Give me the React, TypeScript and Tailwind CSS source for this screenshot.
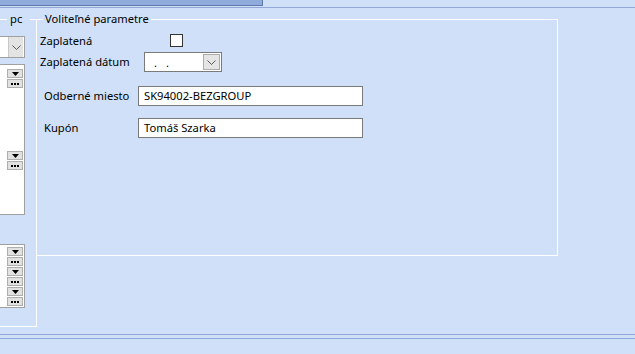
import type { ReactNode } from "react"

/* 小按钮：下拉箭头 */
function ArrowBtn() {
  return (
    <div className="w-[16px] h-[9px] bg-[#e1e1e1] border border-[#adadad] flex items-center justify-center">
      <svg width="7" height="4" viewBox="0 0 7 4">
        <path d="M0 0h7L3.5 4z" fill="#000" />
      </svg>
    </div>
  )
}

/* 小按钮：三个点 */
function DotsBtn() {
  return (
    <div className="w-[16px] h-[9px] bg-[#e1e1e1] border border-[#adadad] flex items-center justify-center">
      <svg width="8" height="2" viewBox="0 0 8 2">
        <rect x="0" y="0" width="2" height="2" fill="#000" />
        <rect x="3" y="0" width="2" height="2" fill="#000" />
        <rect x="6" y="0" width="2" height="2" fill="#000" />
      </svg>
    </div>
  )
}

function BtnPair() {
  return (
    <div className="flex flex-col gap-[1px]">
      <ArrowBtn />
      <DotsBtn />
    </div>
  )
}

function Chevron() {
  return (
    <svg width="9" height="5" viewBox="0 0 9 5">
      <path d="M0.5 0.5L4.5 4.5L8.5 0.5" fill="none" stroke="#5a5a5a" strokeWidth="1" />
    </svg>
  )
}

function Row({ children, className }: { children: ReactNode; className: string }) {
  return <div className={"flex items-center " + className}>{children}</div>
}

export default function App() {
  return (
    <div
      className="w-[635px] h-[354px] bg-[#cfe0f8] overflow-hidden flex flex-col text-[11.2px] leading-[16px] text-black"
      style={{ fontFamily: '"Noto Sans", "Open Sans", sans-serif' }}
    >
      {/* 顶部标签条 */}
      <div className="h-[7px] flex">
        <div className="w-[263px] h-[6px] bg-[#8fabdc] border-r border-b border-[#5d7aa8]" />
      </div>
      <div className="h-[1px] bg-[#91a8d6]" />

      {/* 主体 */}
      <div className="flex mt-[3px]">
        {/* 左侧面板 */}
        <fieldset className="w-[37px] h-[316px] border-t border-r border-b border-white flex flex-col">
          <legend className="ml-[7px] w-[23px] px-[3px]">pc</legend>
          {/* combo */}
          <div className="mt-[9px] w-[25px] h-[22px] bg-white border-t border-r border-b border-[#a0a0a0] flex justify-end items-center pr-[1px]">
            <div className="w-[15px] h-[20px] bg-[#e3e3e3] border-l border-[#c8c8c8] flex items-center justify-center">
              <Chevron />
            </div>
          </div>
          {/* list 1 */}
          <div className="mt-[6px] w-[25px] h-[151px] bg-white border-t border-r border-b border-[#a0a0a0] flex flex-col items-end pr-[1px]">
            <div className="mt-[4px]">
              <BtnPair />
            </div>
            <div className="mt-[63px]">
              <BtnPair />
            </div>
          </div>
          {/* list 2 */}
          <div className="mt-[29px] w-[25px] h-[64px] bg-white border-t border-r border-b border-[#a0a0a0] flex flex-col items-end pr-[1px] pt-[2px] gap-[1px]">
            <BtnPair />
            <BtnPair />
            <BtnPair />
          </div>
        </fieldset>

        {/* 可选参数 */}
        <fieldset className="w-[521px] h-[245px] border-t border-r border-b border-white">
          <legend className="ml-[6px] px-[2px]">Voliteľné parametre</legend>

          <Row className="mt-[7px] h-[13px] pl-[3px]">
            <span className="w-[130px]">Zaplatená</span>
            <div className="w-[13px] h-[13px] bg-white border border-[#333333]" />
          </Row>

          <Row className="mt-[5px] h-[20px] pl-[3px]">
            <span className="w-[104px]">Zaplatená dátum</span>
            <div className="w-[78px] h-[20px] bg-white border border-[#7a7a7a] flex items-center justify-between pl-[9px] pr-[1px]">
              <span className="tracking-[3px] pt-[2px]">. .</span>
              <div className="w-[17px] h-[16px] bg-[#e5e5e5] border border-[#acacac] flex items-center justify-center">
                <Chevron />
              </div>
            </div>
          </Row>

          <Row className="mt-[14px] h-[20px] pl-[7px]">
            <span className="w-[94px]">Odberné miesto</span>
            <div className="w-[225px] h-[20px] bg-white border border-[#7a7a7a] flex items-center px-[5px]">
              SK94002-BEZGROUP
            </div>
          </Row>

          <Row className="mt-[12px] h-[20px] pl-[7px]">
            <span className="w-[94px]">Kupón</span>
            <div className="w-[225px] h-[20px] bg-white border border-[#7a7a7a] flex items-center px-[5px]">
              Tomáš Szarka
            </div>
          </Row>
        </fieldset>
      </div>

      {/* 底部双线 */}
      <div className="mt-[7px] h-[1px] bg-[#8fa8d8]" />
      <div className="mt-[3px] h-[1px] bg-[#8fa8d8]" />
    </div>
  )
}
